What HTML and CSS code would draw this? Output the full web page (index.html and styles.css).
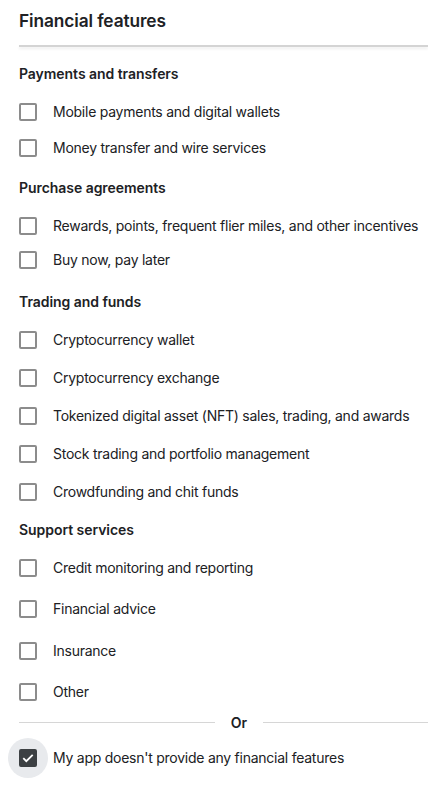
FILE: index.html
```html
<!DOCTYPE html>
<html>
<head>
<meta charset="utf-8">
<link rel="stylesheet" href="styles.css">
</head>
<body>
<div class="page">
  <h1 class="title">Financial features</h1>
  <div class="shadow-rule"></div>

  <section class="group g1">
    <h2 class="heading">Payments and transfers</h2>
    <label class="row"><span class="box"></span><span class="label">Mobile payments and digital wallets</span></label>
    <label class="row"><span class="box"></span><span class="label">Money transfer and wire services</span></label>
  </section>

  <section class="group g2">
    <h2 class="heading">Purchase agreements</h2>
    <label class="row"><span class="box"></span><span class="label">Rewards, points, frequent flier miles, and other incentives</span></label>
    <label class="row"><span class="box"></span><span class="label">Buy now, pay later</span></label>
  </section>

  <section class="group g3">
    <h2 class="heading">Trading and funds</h2>
    <label class="row"><span class="box"></span><span class="label">Cryptocurrency wallet</span></label>
    <label class="row"><span class="box"></span><span class="label">Cryptocurrency exchange</span></label>
    <label class="row"><span class="box"></span><span class="label">Tokenized digital asset (NFT) sales, trading, and awards</span></label>
    <label class="row"><span class="box"></span><span class="label">Stock trading and portfolio management</span></label>
    <label class="row"><span class="box"></span><span class="label">Crowdfunding and chit funds</span></label>
  </section>

  <section class="group g4">
    <h2 class="heading">Support services</h2>
    <label class="row"><span class="box"></span><span class="label">Credit monitoring and reporting</span></label>
    <label class="row"><span class="box"></span><span class="label">Financial advice</span></label>
    <label class="row"><span class="box"></span><span class="label">Insurance</span></label>
    <label class="row"><span class="box"></span><span class="label">Other</span></label>
  </section>

  <div class="or"><span class="or-line"></span><span class="or-text">Or</span><span class="or-line"></span></div>

  <label class="row final"><span class="ripple"><span class="box checked"><svg viewBox="0 0 18 18" width="18" height="18"><path d="M4.3 9.2l3 3 6.4-6.4" fill="none" stroke="#fff" stroke-width="1.8"/></svg></span></span><span class="label">My app doesn't provide any financial features</span></label>
</div>
</body>
</html>
```

FILE: styles.css
```css
* { box-sizing: border-box; }
html, body { margin: 0; padding: 0; background: #fff; }
body {
  font-family: Inter, Roboto, "Noto Sans", sans-serif;
  color: #202124;
  width: 428px;
  height: 789px;
  overflow: hidden;
}
.page {
  padding-left: 19px;
}
.title {
  margin: 0;
  font-size: 17.3px;
  font-weight: 600;
  line-height: 22px;
  padding-top: 10px;
  letter-spacing: -0.1px;
}
.shadow-rule {
  margin-top: 13px;
  height: 2px;
  background: #d4d4d4;
  box-shadow: 0 2px 3px rgba(0,0,0,0.08);
  margin-bottom: 17px;
}
.group { display: flex; flex-direction: column; }
.heading {
  margin: 0;
  font-size: 14px;
  font-weight: 600;
  line-height: 20px;
  letter-spacing: -0.05px;
}
.row {
  display: flex;
  align-items: center;
  gap: 16px;
  font-size: 14px;
  line-height: 20px;
  letter-spacing: -0.25px;
  white-space: nowrap;
}
.box {
  width: 18px;
  height: 18px;
  border: 2px solid #8c8c8c;
  border-radius: 2px;
  flex: none;
  display: flex;
  align-items: center;
  justify-content: center;
}
.g1 .heading { margin-bottom: 10px; }
.g1 .row { height: 36px; }
.g1 { margin-bottom: 12px; }
.g2 .heading { margin-bottom: 11px; }
.g2 .row { height: 34px; }
.g2 { margin-bottom: 15px; }
.g3 .heading { margin-bottom: 9px; }
.g3 .row { height: 38px; }
.g3 { margin-bottom: 9px; }
.g4 .heading { margin-bottom: 7px; }
.g4 .row { height: 41.5px; }
.or {
  display: flex;
  align-items: center;
  margin-top: -3px;
  height: 24px;
}
.or-line { height: 1px; background: #d6d6d6; }
.or-line:first-child { width: 196px; }
.or-line:last-child { flex: 1; }
.or-text {
  width: 48px;
  text-align: center;
  font-size: 14px;
  font-weight: 600;
}
.final {
  margin-top: 4px;
  margin-left: -11px;
  gap: 5px;
}
.ripple {
  width: 40px;
  height: 40px;
  border-radius: 50%;
  background: #e8eaed;
  display: flex;
  align-items: center;
  justify-content: center;
  flex: none;
}
.box.checked {
  background: #3c4043;
  border-color: #3c4043;
}
.box.checked svg { flex: none; margin: -2px; }
```
